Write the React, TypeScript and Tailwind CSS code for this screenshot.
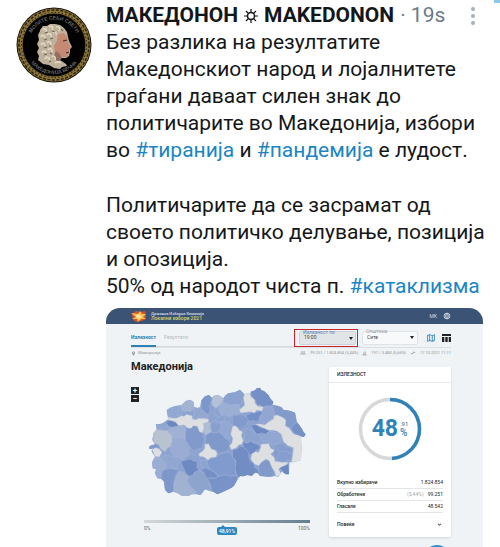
import {
  MdCompareArrows,
  MdExpandMore,
  MdLanguage,
  MdOutlineHowToVote,
  MdOutlineMap,
  MdPeopleOutline,
  MdPlace,
} from 'react-icons/md';

type Region = { points: string; fill: string };

// Outline of the country, also used to clip the municipalities
const border =
  '82,120 80,105 90,98 105,93 125,90 137,78 150,74 160,80 162,95 172,99 180,97 184,76 195,64 207,60 215,68 222,62 235,60 250,70 258,60 265,55 285,52 300,44 313,58 325,54 332,58 332,50 345,46 350,40 360,38 364,46 372,48 385,60 392,72 400,80 398,90 412,92 425,97 430,104 440,106 452,108 465,113 468,128 470,140 478,150 485,160 490,170 497,178 492,186 483,185 484,220 483,255 460,262 448,262 447,298 438,298 425,290 415,305 403,303 385,306 372,304 360,303 352,294 345,293 335,303 322,300 310,304 300,303 290,318 282,332 275,338 250,350 232,358 220,350 210,348 195,343 182,360 168,358 155,358 145,363 125,362 112,354 100,350 85,355 75,345 72,320 65,312 52,310 45,295 48,282 38,280 36,262 45,245 35,230 36,222 27,221 29,213 45,208 37,195 40,175 50,163 47,148 65,146 75,140 85,133';

const regions: Region[] = [
  { points: '80,105 105,93 118,94 124,100 130,108 126,120 110,122 104,128 85,124', fill: '#93a8d0' },
  { points: '116,90 137,78 150,74 162,80 162,98 156,106 150,112 142,108 132,110 124,100', fill: '#a3b4d3' },
  { points: '162,98 182,96 186,104 192,110 196,118 205,120 200,130 190,128 180,138 168,134 160,128', fill: '#93a8d0' },
  { points: '184,76 195,60 214,58 216,72 212,84 208,92 210,104 206,118 196,114 192,108 184,104', fill: '#7b96c8' },
  { points: '216,58 250,60 252,70 248,80 242,88 236,94 228,100 220,94 214,84 218,72', fill: '#b3c0d6' },
  { points: '250,66 265,50 313,44 316,72 308,76 304,84 296,90 284,88 270,92 262,86 250,84', fill: '#8ba2d0' },
  { points: '248,82 262,86 270,92 284,88 298,90 298,102 304,110 296,118 280,116 274,124 262,124 252,118 246,122 236,108 238,96', fill: '#9bafd5' },
  { points: '48,145 75,136 105,130 112,140 118,150 105,160 80,158 60,164', fill: '#91a7d0' },
  { points: '78,142 90,135 104,140 116,148 114,156 100,158 86,154', fill: '#6c89c2' },
  { points: '37,175 52,163 66,166 82,166 90,176 98,184 96,200 92,214 82,220 76,230 66,224 60,220 52,208 42,204', fill: '#b9c2d1' },
  { points: '82,164 100,156 118,152 132,154 138,160 134,174 136,190 120,188 104,192 94,178', fill: '#a1b1d4' },
  { points: '27,212 46,206 56,210 62,220 50,218 40,224 28,222', fill: '#8199cb' },
  { points: '98,196 112,190 134,192 140,204 150,215 146,226 150,238 138,246 128,256 108,246 98,238 90,226', fill: '#9aacd3' },
  { points: '138,158 152,152 166,152 178,162 190,168 188,178 194,192 190,206 186,220 172,222 160,228 148,212 136,196', fill: '#8199cb' },
  { points: '60,248 76,240 100,244 112,252 120,260 112,270 108,282 94,278 82,282 76,262', fill: '#91a6d0' },
  { points: '36,248 60,246 66,256 76,262 78,274 74,284 66,290 62,314 44,300 38,276', fill: '#9aadd3' },
  { points: '66,290 74,284 90,280 108,284 118,282 108,296 104,312 100,326 104,340 100,356 82,358 62,314', fill: '#7d98c8' },
  { points: '118,288 130,292 142,302 148,304 142,316 148,330 158,338 170,350 148,366 98,358 102,326 108,306', fill: '#a0b1d2' },
  { points: '122,260 136,256 150,252 160,258 172,260 170,274 176,288 164,292 158,302 148,304 138,296 132,282', fill: '#6c89c1' },
  { points: '150,304 160,300 164,292 178,286 188,294 202,306 206,320 212,336 216,350 180,364 160,342 148,330 142,316', fill: '#8da5cc' },
  { points: '198,182 210,172 222,174 236,172 248,180 256,190 266,196 270,210 266,224 252,230 238,236 230,226 212,222 200,212 196,202', fill: '#7f99ca' },
  { points: '188,140 202,140 212,144 210,158 214,170 204,176 194,180 188,166', fill: '#afbdd5' },
  { points: '212,142 226,144 240,144 244,156 238,168 228,172 216,172', fill: '#879fce' },
  { points: '242,142 256,138 270,142 278,154 276,166 272,178 270,192 258,190 248,178 240,168 244,154', fill: '#92a8d3' },
  { points: '276,124 292,120 306,118 318,126 328,132 322,142 318,152 308,158 302,166 290,156 278,150', fill: '#829bcc' },
  { points: '200,258 214,250 230,246 244,236 258,232 274,234 278,246 286,258 286,276 290,300 272,304 256,300 238,304 224,292 210,284 204,270', fill: '#829bce' },
  { points: '184,282 196,278 210,284 222,292 234,302 226,310 214,308 200,310 192,294', fill: '#7490c5' },
  { points: '202,310 226,310 240,302 256,300 272,304 292,302 292,324 276,344 230,362 216,350 212,330', fill: '#7793c7' },
  { points: '278,224 292,222 300,214 310,216 320,224 330,226 326,242 330,258 342,266 344,278 354,284 358,296 336,308 292,306 286,280 288,258 278,246', fill: '#718dc3' },
  { points: '308,200 322,204 332,198 342,204 358,210 360,220 348,226 342,234 330,240 322,226 310,216', fill: '#6f8cc4' },
  { points: '318,122 332,114 346,112 362,108 370,114 360,122 358,132 350,140 338,136 328,140', fill: '#7490c7' },
  { points: '332,150 350,150 362,158 374,160 388,166 378,178 366,174 350,178 342,166', fill: '#6b88c3' },
  { points: '308,166 320,162 336,164 344,176 356,178 362,188 356,204 344,204 332,198 320,204 312,194 314,180', fill: '#8ca3d0' },
  { points: '330,50 360,34 388,58 402,82 394,94 380,92 370,96 360,90 350,90 346,76 336,66', fill: '#7590c6' },
  { points: '370,98 380,94 394,94 398,104 406,112 400,122 394,134 384,142 378,152 368,142 360,132 364,120', fill: '#91a7d1' },
  { points: '396,88 440,98 468,110 474,142 462,148 456,158 444,158 436,148 438,138 428,128 416,124 404,116', fill: '#829bcb' },
  { points: '452,160 462,148 472,142 500,178 492,188 476,184 466,178', fill: '#7490c6' },
  { points: '362,186 378,178 392,168 404,172 414,170 424,178 426,190 422,200 412,206 400,212 388,206 370,206', fill: '#91a7d1' },
  { points: '402,214 414,206 428,206 436,214 448,216 460,222 456,236 458,256 442,256 430,262 412,258 400,246', fill: '#859ece' },
  { points: '356,272 366,262 382,252 390,262 394,274 400,284 404,306 358,306', fill: '#819ac9' },
  { points: '415,278 430,270 446,268 448,302 436,300 426,286', fill: '#6c89c1' },
];

// Municipalities that have not reported yet
const emptyRegions: string[] = [
  '82,126 100,130 112,128 124,122 132,124 140,118 156,122 158,132 168,134 176,130 188,130 206,132 206,140 196,144 190,146 192,158 188,174 178,170 172,154 160,152 154,160 144,160 132,150 116,152 106,140 84,134',
  '314,54 328,54 334,66 344,74 346,86 354,94 370,96 366,108 350,106 344,114 332,110 320,112 302,114 298,104 308,96 314,90 310,70',
  '346,148 360,146 374,150 386,140 400,132 402,122 412,120 430,128 438,136 436,152 448,160 460,176 484,184 486,262 454,262 458,240 460,218 444,212 430,200 424,178 410,168 398,166 386,166 372,160',
  '278,154 284,152 292,156 298,166 308,170 304,182 310,196 306,208 296,210 290,218 274,224 268,212 276,204 278,190 272,178',
  '176,236 188,228 194,220 194,208 206,206 214,222 226,226 232,236 228,246 212,248 204,256 192,246 178,244',
  '36,222 48,218 58,222 66,232 58,246 44,244',
  '332,252 336,236 346,230 356,232 362,218 362,208 386,206 392,220 404,226 392,238 404,248 404,258 424,262 446,262 438,270 424,276 416,282 424,298 408,306 404,290 396,278 388,258 378,252 364,262 356,272 344,268',
];

const seams: string[] = [
  '200,130 208,124 216,112 224,118 232,128 240,124 248,118 256,130 250,138 240,142 230,138 220,136 212,142 206,144',
  '226,98 222,108 226,118 238,126',
  '150,236 160,238 168,242 180,256 200,258',
  '186,254 182,262 182,272 194,284',
  '408,216 416,226 426,230 440,230 458,236',
  '418,228 416,240 410,256',
  '118,174 124,182 134,184',
];

const summary = [
  { label: 'Вкупно избирачи', note: '', value: '1.824.854' },
  { label: 'Обработени', note: '(5,44%)', value: '99.251' },
  { label: 'Гласале', note: '', value: '48.542' },
];

function Avatar() {
  return (
    <svg viewBox="0 0 76 76" className="size-[76px] shrink-0" role="img" aria-label="Avatar">
      <defs>
        <path id="arcTop" d="M12.500 38a25.500 25.500 0 0 1 51 0" />
        <path id="arcBottom" d="M9 38a29 29 0 0 0 58 0" />
      </defs>
      <circle cx="38" cy="38" r="37.5" fill="#17130d" />
      <circle cx="38" cy="38" r="34" fill="none" stroke="#8d7637" strokeWidth="5" />
      <circle cx="38" cy="38" r="35" fill="none" stroke="#2c2414" strokeWidth="1.5" strokeDasharray="3 1.5" />
      <circle cx="38" cy="38" r="32.6" fill="none" stroke="#382d16" strokeWidth="1.2" strokeDasharray="1.5 2" />
      <circle cx="38" cy="38" r="30.8" fill="#020202" />
      <text fontSize="5" fill="#8f8c85" textAnchor="middle" fontFamily="Liberation Sans">
        <textPath href="#arcTop" startOffset="50%">МОЛИТЕ СЕБИ СВЕТИ</textPath>
      </text>
      <text fontSize="5" fill="#8f8c85" textAnchor="middle" fontFamily="Liberation Sans">
        <textPath href="#arcBottom" startOffset="50%">МАКЕДОНИЈА ВЕЧНА</textPath>
      </text>
      <path
        d="M24 23l3-4 4 0 3-2 5 0 5 1 4 3 3 4 1 5 1 4 3 6-2 2 0 3-1 4-3 2-5 0-1 2 6 4 1 2-5 1-2 2-6-1-5-3-6-1-5-4 1-4-2-4 2-4-2-4 2-4-1-5 2-4z"
        fill="#bfb29c"
      />
      <path d="M42 27l6-1 3 4 1 5 3 6-2 2 0 3-2 4-5 0-4-4-3-1-1-6 3-5z" fill="#c58a74" />
      <path d="M40 44l4 3 2 4-4 4-5-5z" fill="#94705f" />
      <path
        d="M27 23c2-3 4 0 3 2M33 20c2-2 5 0 3 3M40 20c3-1 5 1 3 4M25 30c1-3 4-2 4 1M31 28c2-3 5-1 4 2M37 26c2-2 4 0 3 2M25 38c1-3 4-2 4 1M31 36c2-3 4-1 4 2M26 46c1-3 4-2 4 0M32 43c2-3 4-1 4 2M29 52c1-3 5-2 4 1M36 50c2-2 4 0 3 3M39 56c2-2 5-1 6 0"
        fill="none"
        stroke="#e2d8c4"
        strokeWidth="1.6"
      />
      <path
        d="M29 26l3-1M36 24l3 1M28 33l3-1M34 32l3-1M28 41l3-1M33 39l2 0M28 48l3-1M34 46l2 1M33 55l2-1M45 22l2 2"
        stroke="#746754"
        strokeWidth="1.2"
      />
      <path d="M47 34l4-1M50 46l3-1" stroke="#4b2b24" strokeWidth="1.1" />
    </svg>
  );
}

function Sun() {
  return (
    <svg viewBox="0 0 14 14" className="size-[14px] shrink-0" fill="none" stroke="#14171a" strokeWidth="1.2">
      <circle cx="7" cy="7" r="3.5" strokeWidth="1.5" />
      <path d="M7 0v3M7 11v3M0 7h3M11 7h3M2 2l2.5 2.5M9.5 9.5L12 12M12 2L9.500 4.500M4.500 9.500L2 12" />
    </svg>
  );
}

function Tag({ children }: { children: string }) {
  return (
    <a href={'#' + children} className="text-[#1b85c4]">
      #{children}
    </a>
  );
}

function SiteLogo() {
  return (
    <svg viewBox="0 0 16 12" className="h-3 w-4">
      <path d="M1 4l4-3 5 1 4-1 1 5-1 4-4 1-4 1-4-2z" fill="#d9532f" />
      <path d="M0 3l7 1 2-3 2 3 4 0-3 3 3 2-5 0-3 3-1-3-5 0 4-2z" fill="#f3c04a" />
      <path d="M6 4l3 1 2 2-3 2-3-2z" fill="#fbe7ad" />
    </svg>
  );
}

function CountryMap() {
  return (
    <svg viewBox="24 0 480 390" className="ml-[9px] w-full max-w-[160px]" role="img" aria-label="Македонија">
      <clipPath id="country">
        <polygon points={border} />
      </clipPath>
      <polygon points={border} fill="#8ca3d0" />
      <g clipPath="url(#country)" stroke="#a9b9dc" strokeWidth="1.2" strokeLinejoin="round">
        {regions.map((region) => (
          <polygon key={region.points} points={region.points} fill={region.fill} />
        ))}
        {emptyRegions.map((points) => (
          <polygon key={points} points={points} fill="#dddfe0" />
        ))}
        {seams.map((points) => (
          <polyline key={points} points={points} fill="none" />
        ))}
      </g>
    </svg>
  );
}

function Filter({ id, label, value, active }: { id: string; label: string; value: string; active?: boolean }) {
  return (
    <div className={active ? 'relative h-[18px] w-16 border border-[#c9252b] p-px pl-1' : 'relative h-[18px] w-14 py-0.5'}>
      <label
        htmlFor={id}
        className={
          active
            ? 'absolute -top-px left-2 text-[5px] leading-[6px] text-[#5f84b0]'
            : 'absolute -top-px left-1 text-[5px] leading-[6px] text-[#9a9fa5]'
        }
      >
        {label}
      </label>
      <select
        id={id}
        className={
          active
            ? 'block h-full w-full appearance-none rounded-xs border border-[#ced3d7] bg-[#e2e5e7] pl-1 text-[5px] text-[#444]'
            : 'block h-full w-full appearance-none rounded-xs border border-[#dfe3e5] bg-[#f7f9fa] pl-1 text-[5px] text-[#444]'
        }
      >
        <option>{value}</option>
      </select>
      <span className="pointer-events-none absolute top-[7px] right-1 border-x-2 border-t-3 border-x-transparent border-t-[#222]" />
    </div>
  );
}

function Turnout() {
  return (
    <section className="w-[122px] shrink-0 rounded-xs bg-white shadow-sm">
      <h3 className="border-b border-[#e6e8ea] px-2 text-[5px] leading-[15px] font-medium text-[#222]">ИЗЛЕЗНОСТ</h3>
      <div className="relative mx-auto mt-[14px] size-16">
        <svg viewBox="0 0 64 64" className="size-16 -rotate-90" fill="none" strokeWidth="3.5">
          <circle cx="32" cy="32" r="29.5" stroke="#d5d7d9" />
          <circle cx="32" cy="32" r="29.5" stroke="#2f83b8" pathLength="100" strokeDasharray="48.910 100" />
        </svg>
        <div className="absolute inset-0 flex items-center justify-center text-[#2f83b8]">
          <span className="text-[23px] leading-6 font-bold">48</span>
          <span className="ml-0.5 flex flex-col">
            <span className="text-[6px] leading-[8px] text-[#3d6177]">.91</span>
            <span className="text-[10px] leading-[10px] font-medium">%</span>
          </span>
        </div>
      </div>
      <div className="mt-4 px-2 pb-2">
        <table className="w-full text-[5px] leading-[11px] text-[#222]">
          <tbody>
            {summary.map((row) => (
              <tr key={row.label} className="border-b border-[#e3e5e7]">
                <th scope="row" className="p-0 text-left font-medium">{row.label}</th>
                <td className="p-0 text-right">
                  <span className="mr-1 text-[#a4a8ab]">{row.note}</span>
                  {row.value}
                </td>
              </tr>
            ))}
          </tbody>
        </table>
        <button className="mt-1.5 flex w-full items-center justify-between text-[5px] leading-[10px] font-medium text-[#222]">
          Повеќе
          <MdExpandMore className="size-[7px]" />
        </button>
      </div>
    </section>
  );
}

function ElectionSite() {
  return (
    <div className="relative h-[252px] overflow-hidden rounded-t-[14px] bg-[#eff3f5] text-[#222]">
      <header className="flex h-4 items-center bg-[#3b5374] pr-8 pl-[25px]">
        <SiteLogo />
        <div className="ml-1 text-[5px] leading-[5px] font-medium">
          <p className="text-[4px] text-[#d5dde6]">Државна Изборна Комисија</p>
          <p className="text-[#d9d36b]">Локални избори 2021</p>
        </div>
        <span className="ml-auto text-[5px] leading-[6px] text-[#d5dde6]">МК</span>
        <MdLanguage className="ml-1.5 size-2 text-[#e2e8ee]" />
      </header>

      <div className="pr-8 pl-[25px]">
        <div className="mt-[5px] flex h-[18px] items-center">
          <nav className="flex h-full flex-1 gap-2 self-stretch border-b border-[#d5d9dc] text-[5px] leading-[17px]">
            <a href="#turnout" className="h-[18px] border-b-2 border-[#3080b2] font-bold text-[#3080b2]">Излезност</a>
            <a href="#results" className="text-[#b4babf]">Резултати</a>
          </nav>
          <Filter id="hour" label="Излезност по" value="19:00" active />
          <div className="ml-1">
            <Filter id="district" label="Општина" value="Сите" />
          </div>
          <button aria-label="Мапа" className="ml-2">
            <MdOutlineMap className="size-2.5 text-[#2980b5]" />
          </button>
          <button aria-label="Табела" className="ml-1.5">
            <svg viewBox="0 0 9 8" className="h-2 w-[9px]" fill="#222">
              <path d="M0 0h9v2H0zM0 3h2.300v5H0zM3.300 3h2.400v5H3.300zM6.700 3H9v5H6.700z" />
            </svg>
          </button>
        </div>

        <div className="flex items-center gap-1 border-t border-[#dde1e3] pt-0.5 text-[4px] leading-[6px] text-[#8f959a]">
          <MdPlace className="-mr-0.5 size-[5px]" />
          <span className="mr-auto">Македонија</span>
          <MdPeopleOutline className="size-[6px]" />
          <span>99.251 / 1.824.854 (5,44%)</span>
          <MdOutlineHowToVote className="size-[5px]" />
          <span>197 / 3.480 (5,66%)</span>
          <MdCompareArrows className="size-[6px]" />
          <span>17.10.2021 11:11</span>
        </div>

        <div className="mt-[11px] flex gap-2">
          <div className="min-w-0 flex-1">
            <h2 className="-mt-2 h-4 text-[11px] leading-4 font-bold">Македонија</h2>
            <div className="flex items-start">
              <div className="mt-3 flex w-[8px] shrink-0 flex-col gap-px text-[8px] leading-[7px] font-bold text-white">
                <button aria-label="Зголеми" className="h-[7px] bg-[#222]">+</button>
                <button aria-label="Намали" className="h-[7px] bg-[#222]">−</button>
              </div>
              <CountryMap />
            </div>
            <div className="mt-[15px] mr-[11px] ml-[13px]">
              <div className="h-[3px] bg-linear-to-r from-[#d6d9da] to-[#647f8f]" />
              <div className="mt-0.5 flex justify-between text-[5px] leading-[6px] text-[#666]">
                <span className="flex-1">0%</span>
                <span className="relative mt-0.5 rounded-xs bg-[#2d86bf] px-0.5 leading-[8px] font-medium text-white">
                  <span className="absolute -top-0.5 left-1 border-x-2 border-b-2 border-x-transparent border-b-[#2d86bf]" />
                  48,91%
                </span>
                <span className="flex-1 text-right">100%</span>
              </div>
            </div>
          </div>
          <Turnout />
        </div>
      </div>
      <button aria-label="Помош" className="absolute top-[237px] right-8 size-7 rounded-full bg-[#2f8fd0]" />
    </div>
  );
}

export default function App() {
  return (
    <main className="relative flex h-screen items-start gap-3.5 overflow-hidden bg-white pl-4 font-['Roboto','Noto_Sans',sans-serif] text-[#14171a]">
      <div className="pt-[7px]">
        <Avatar />
      </div>
      <article className="min-w-0 flex-1 pt-0.5 pr-[17px]">
        <header className="flex h-[27px] items-center text-[21px] leading-[27px] whitespace-nowrap">
          <h1 className="flex items-center gap-1.5 font-bold">
            МАКЕДОНОН
            <Sun />
            MAKEDONON
          </h1>
          <span className="ml-1.5 text-[#697a88]">· 19s</span>
          <button aria-label="Повеќе опции" className="ml-auto pr-2">
            <svg viewBox="0 0 4 18" className="h-[18px] w-1" fill="#a5b0b8">
              <circle cx="2" cy="2" r="2" />
              <circle cx="2" cy="9" r="2" />
              <circle cx="2" cy="16" r="2" />
            </svg>
          </button>
        </header>
        <p className="text-[21px] leading-[27px] whitespace-nowrap">
          Без разлика на резултатите
          <br />
          Македонскиот народ и лојалнитете
          <br />
          граѓани даваат силен знак до
          <br />
          политичарите во Македонија, избори
          <br />
          во <Tag>тиранија</Tag> и <Tag>пандемија</Tag> е лудост.
        </p>
        <p className="mt-7 mb-2 text-[21px] leading-[27px] whitespace-nowrap">
          Политичарите да се засрамат од
          <br />
          своето политичко делување, позиција
          <br />
          и опозиција.
          <br />
          50% од народот чиста п. <Tag>катаклизма</Tag>
        </p>
        <ElectionSite />
      </article>
      <span className="absolute top-0 right-0 h-[3px] w-[6px] bg-[#8fc7ea]" />
    </main>
  );
}
